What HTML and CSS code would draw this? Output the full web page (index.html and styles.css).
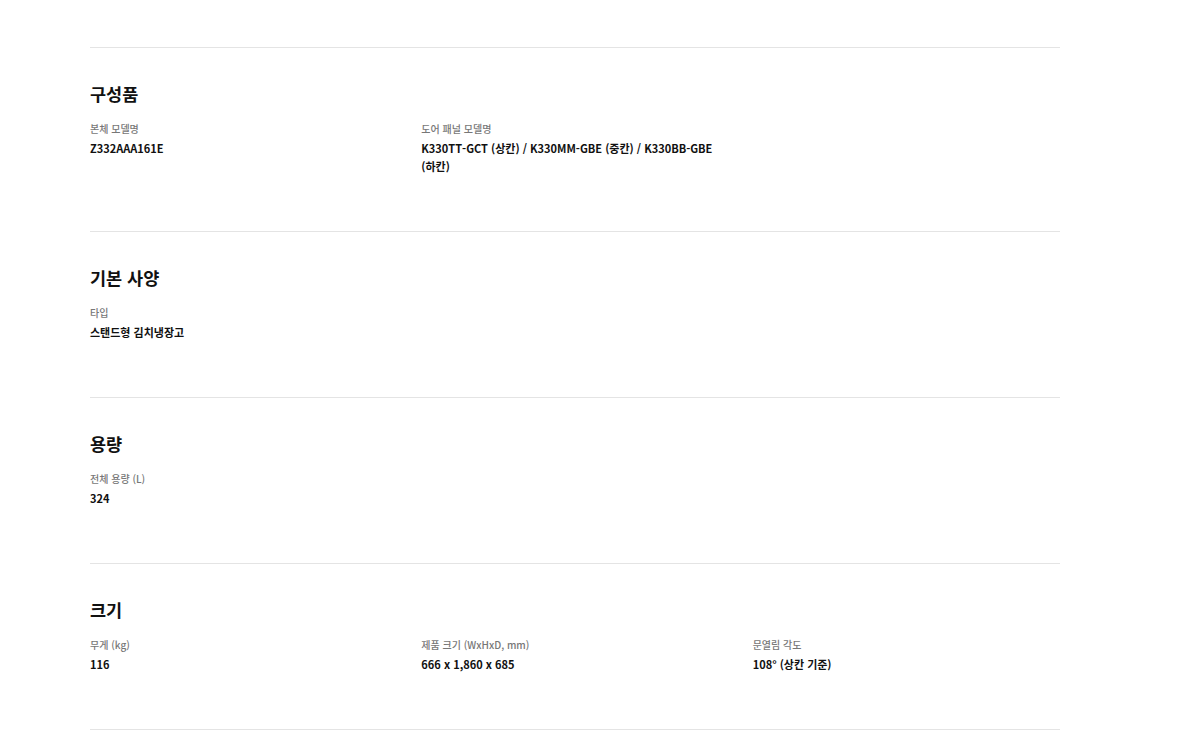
FILE: index.html
```html
<!DOCTYPE html>
<html lang="ko">
<head>
  <meta charset="UTF-8">
  <title>제품 사양</title>
  <link rel="stylesheet" href="styles.css">
</head>
<body>
  <div class="spec">
    <section class="spec-group">
      <h3>구성품</h3>
      <div class="spec-grid">
        <div class="spec-item">
          <div class="spec-label">본체 모델명</div>
          <div class="spec-value">Z332AAA161E</div>
        </div>
        <div class="spec-item">
          <div class="spec-label">도어 패널 모델명</div>
          <div class="spec-value">K330TT-GCT (상칸) / K330MM-GBE (중칸) / K330BB-GBE (하칸)</div>
        </div>
      </div>
    </section>

    <section class="spec-group">
      <h3>기본 사양</h3>
      <div class="spec-grid">
        <div class="spec-item">
          <div class="spec-label">타입</div>
          <div class="spec-value">스탠드형 김치냉장고</div>
        </div>
      </div>
    </section>

    <section class="spec-group">
      <h3>용량</h3>
      <div class="spec-grid">
        <div class="spec-item">
          <div class="spec-label">전체 용량 (L)</div>
          <div class="spec-value">324</div>
        </div>
      </div>
    </section>

    <section class="spec-group">
      <h3>크기</h3>
      <div class="spec-grid">
        <div class="spec-item">
          <div class="spec-label">무게 (kg)</div>
          <div class="spec-value">116</div>
        </div>
        <div class="spec-item">
          <div class="spec-label">제품 크기 (WxHxD, mm)</div>
          <div class="spec-value">666 x 1,860 x 685</div>
        </div>
        <div class="spec-item">
          <div class="spec-label">문열림 각도</div>
          <div class="spec-value">108° (상칸 기준)</div>
        </div>
      </div>
    </section>
    <div class="spec-end"></div>
  </div>
</body>
</html>
```

FILE: styles.css
```css
body {
  margin: 0;
  background: #fff;
  font-family: "Noto Sans CJK KR", "Noto Sans", sans-serif;
  color: #111;
}
.spec {
  width: 970px;
  margin-left: 90px;
  padding-top: 47px;
}
.spec-group {
  border-top: 1px solid #e4e4e4;
  padding: 33px 0 56px;
}
.spec-group h3 {
  margin: 0 0 14px;
  font-size: 17.5px;
  line-height: 26px;
  font-weight: bold;
}
.spec-grid {
  display: grid;
  grid-template-columns: repeat(3, 1fr);
  gap: 24px;
}
.spec-label {
  font-size: 10px;
  line-height: 16px;
  font-weight: 500;
  color: #777;
  margin-bottom: 2px;
}
.spec-value {
  font-size: 11px;
  line-height: 18px;
  font-weight: bold;
}
.spec-end {
  border-top: 1px solid #e4e4e4;
}
```
